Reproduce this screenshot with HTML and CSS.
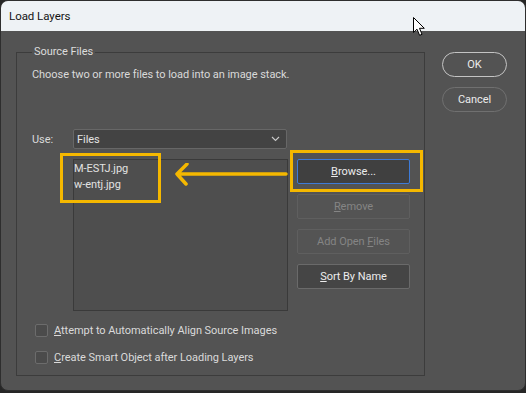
FILE: index.html
```html
<!DOCTYPE html>
<html>
<head>
<meta charset="utf-8">
<link rel="stylesheet" href="styles.css">
</head>
<body>
<div class="window">
  <div class="titlebar">Load Layers</div>
  <div class="content">
    <fieldset class="group">
      <legend>Source Files</legend>
      <p class="desc">Choose two or more files to load into an image stack.</p>
      <div class="use-row">
        <span class="use-label">Use:</span>
        <div class="select">
          <span>Files</span>
          <svg class="chev" width="9" height="6" viewBox="0 0 9 6"><path d="M1 1 L4.5 4.5 L8 1" fill="none" stroke="#c8c8c8" stroke-width="1.1"/></svg>
        </div>
      </div>
      <div class="list-row">
        <div class="list">
          <div class="item">M-ESTJ.jpg</div>
          <div class="item">w-entj.jpg</div>
        </div>
        <div class="btns">
          <div class="btn primary"><span><u>B</u>rowse...</span></div>
          <div class="btn disabled"><span><u>R</u>emove</span></div>
          <div class="btn disabled"><span>Add Open <u>F</u>iles</span></div>
          <div class="btn"><span><u>S</u>ort By Name</span></div>
        </div>
        <div class="hl hl-files"></div>
        <div class="hl hl-browse"></div>
        <svg class="arrow" width="116" height="26" viewBox="0 0 116 26"><path d="M114 11 L5 11 M15 1 L5 11 L14 21" fill="none" stroke="#f5b800" stroke-width="3.5" stroke-linecap="round" stroke-linejoin="round"/></svg>
      </div>
      <div class="checks">
        <label class="check"><span class="box"></span><span><u>A</u>ttempt to Automatically Align Source Images</span></label>
        <label class="check"><span class="box"></span><span><u>C</u>reate Smart Object after Loading Layers</span></label>
      </div>
    </fieldset>
    <div class="side">
      <div class="pill ok">OK</div>
      <div class="pill cancel">Cancel</div>
    </div>
  </div>
  <svg class="cursor" width="14" height="20" viewBox="0 0 14 20"><path d="M0.5 0.5 L0.5 15.5 L4 12.2 L6.6 18.3 L9 17.3 L6.5 11.3 L11.3 11.3 Z" fill="#fff" stroke="#000" stroke-width="1" stroke-linejoin="round"/></svg>
</div>
</body>
</html>
```
FILE: styles.css
```css
html, body {
  margin: 0;
  padding: 0;
  background: #262626;
  width: 526px;
  height: 393px;
  overflow: hidden;
}
body {
  font-family: Roboto, "Liberation Sans", Arial, sans-serif;
  font-size: 11px;
  letter-spacing: -0.05px;
  color: #dadada;
}
.window {
  position: relative;
  box-sizing: border-box;
  width: 526px;
  height: 391px;
  background: #535353;
  border: 1px solid #2e2e2e;
  border-radius: 8px;
  overflow: hidden;
}
.titlebar {
  height: 30px;
  background: #eef2f5;
  color: #141414;
  line-height: 30px;
  padding-left: 8px;
  font-size: 11.5px;
}
.content {
  display: flex;
  align-items: flex-start;
  padding-top: 14px;
}
.group {
  box-sizing: border-box;
  width: 409px;
  margin: 0 0 0 15px;
  padding: 0 14px 10px 15px;
  border: 1px solid #3c3c3c;
  min-width: 0;
}
.group legend {
  padding: 0 2px;
  line-height: 14px;
  color: #dcdcdc;
}
.desc {
  margin: 9px 0 0 0;
  line-height: 14px;
}
.use-row {
  display: flex;
  align-items: center;
  margin-top: 47px;
  height: 20px;
}
.use-label {
  width: 41px;
}
.select {
  box-sizing: border-box;
  width: 214px;
  height: 20px;
  background: #434343;
  border: 1px solid #676767;
  border-radius: 2px;
  display: flex;
  align-items: center;
  justify-content: space-between;
  padding: 0 6px 0 3px;
  color: #e4e4e4;
}
.list-row {
  position: relative;
  display: flex;
  gap: 9px;
  margin-top: 10px;
  margin-left: 41px;
}
.list {
  box-sizing: border-box;
  width: 215px;
  height: 152px;
  background: #4e4e4e;
  border: 1px solid #3a3a3a;
  padding: 1px 0 0 0;
}
.item {
  line-height: 16px;
  color: #e2e2e2;
}
.btns {
  display: flex;
  flex-direction: column;
  gap: 10px;
}
.btn {
  box-sizing: border-box;
  width: 113px;
  height: 25px;
  background: #454545;
  border: 1px solid #6a6a6a;
  border-radius: 2px;
  display: flex;
  align-items: center;
  justify-content: center;
  color: #ececec;
}
.btn.primary {
  background: #404040;
  border-color: #3d7bd8;
}
.btn.disabled {
  background: #545454;
  border-color: #5f5f5f;
  color: #858585;
}
.hl {
  position: absolute;
  box-sizing: border-box;
  border: 3px solid #f5b800;
}
.hl-files {
  left: -13px;
  top: -6px;
  width: 101px;
  height: 50px;
}
.hl-browse {
  left: 217px;
  top: -9px;
  width: 133px;
  height: 42px;
}
.arrow {
  position: absolute;
  left: 99px;
  top: 4px;
}
.checks {
  display: flex;
  flex-direction: column;
  gap: 11px;
  margin-top: 11px;
}
.check {
  display: flex;
  align-items: center;
  height: 16px;
  gap: 6px;
  margin-left: 3px;
}
.box {
  box-sizing: border-box;
  width: 13px;
  height: 13px;
  border: 1px solid #6c6c6c;
  background: #4b4b4b;
  border-radius: 2px;
}
.side {
  display: flex;
  flex-direction: column;
  gap: 10px;
  margin-left: 17px;
  margin-top: 7px;
}
.pill {
  box-sizing: border-box;
  width: 65px;
  height: 25px;
  border-radius: 13px;
  display: flex;
  align-items: center;
  justify-content: center;
  color: #ececec;
}
.pill.ok {
  border: 1.5px solid #c4c4c4;
}
.pill.cancel {
  border: 1px solid #707070;
}
.cursor {
  position: absolute;
  left: 412px;
  top: 16px;
}
```
